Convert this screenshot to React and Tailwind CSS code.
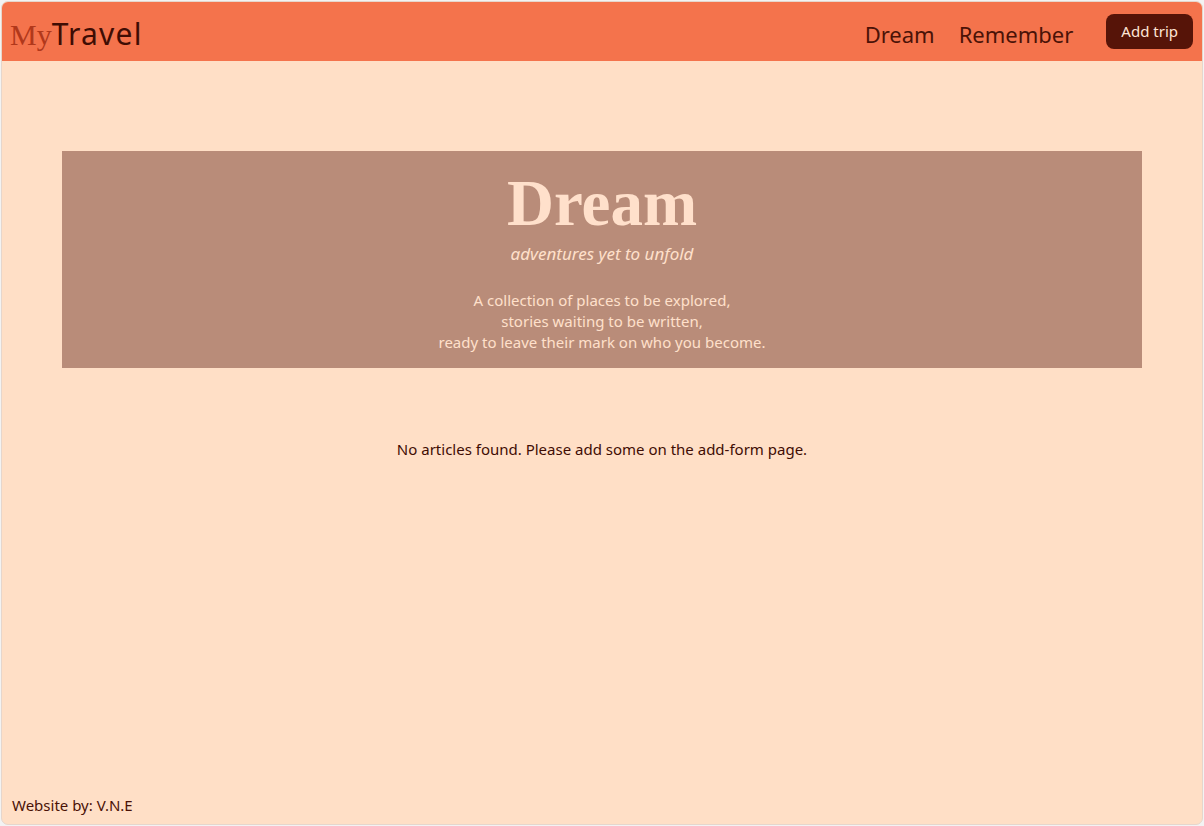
export default function App() {
  return (
    <div className="w-[1204px] h-[826px] bg-[#f3f3f3] p-px" style={{ fontFamily: '"Noto Sans", "Open Sans", sans-serif' }}>
      <div className="flex h-full flex-col overflow-hidden rounded-[7px] border border-[#e6d6cc] bg-[#ffdfc6]">
        <header className="flex h-[59px] shrink-0 items-center justify-between bg-[#f4734c] pl-[8px] pr-[9px]">
          <div className="flex items-baseline pt-[6px] text-[30px] leading-none">
            <span className="text-[#b1381b]" style={{ fontFamily: '"Liberation Serif", serif' }}>My</span>
            <span className="tracking-[1.2px] text-[#3f0d04]">Travel</span>
          </div>
          <nav className="flex items-center">
            <a className="mr-[24px] pt-[6px] text-[22px] text-[#4a1207]">Dream</a>
            <a className="mr-[33px] pt-[6px] text-[22px] text-[#4a1207]">Remember</a>
            <button className="h-[35px] rounded-[8px] bg-[#561408] px-[15px] text-[15px] text-[#ffe6d6]">Add trip</button>
          </nav>
        </header>
        <main className="flex flex-1 flex-col px-[60px] pt-[90px]">
          <section className="flex h-[217px] flex-col items-center bg-[#b98c79] pt-[12px] text-[#ffe0cb]">
            <h1 className="text-[65px] font-bold leading-[80px]" style={{ fontFamily: '"Liberation Serif", serif' }}>Dream</h1>
            <p className="mt-[-1px] text-[17px] italic leading-[24px]">adventures yet to unfold</p>
            <p className="mt-[24px] text-center text-[15px] leading-[21px]">
              A collection of places to be explored,<br />
              stories waiting to be written,<br />
              ready to leave their mark on who you become.
            </p>
          </section>
          <p className="mt-[70px] text-center text-[15px] text-[#3f0d04]">No articles found. Please add some on the add-form page.</p>
        </main>
        <footer className="px-[10px] pb-[8px] text-[15px] text-[#4a1207]">Website by: V.N.E</footer>
      </div>
    </div>
  );
}
